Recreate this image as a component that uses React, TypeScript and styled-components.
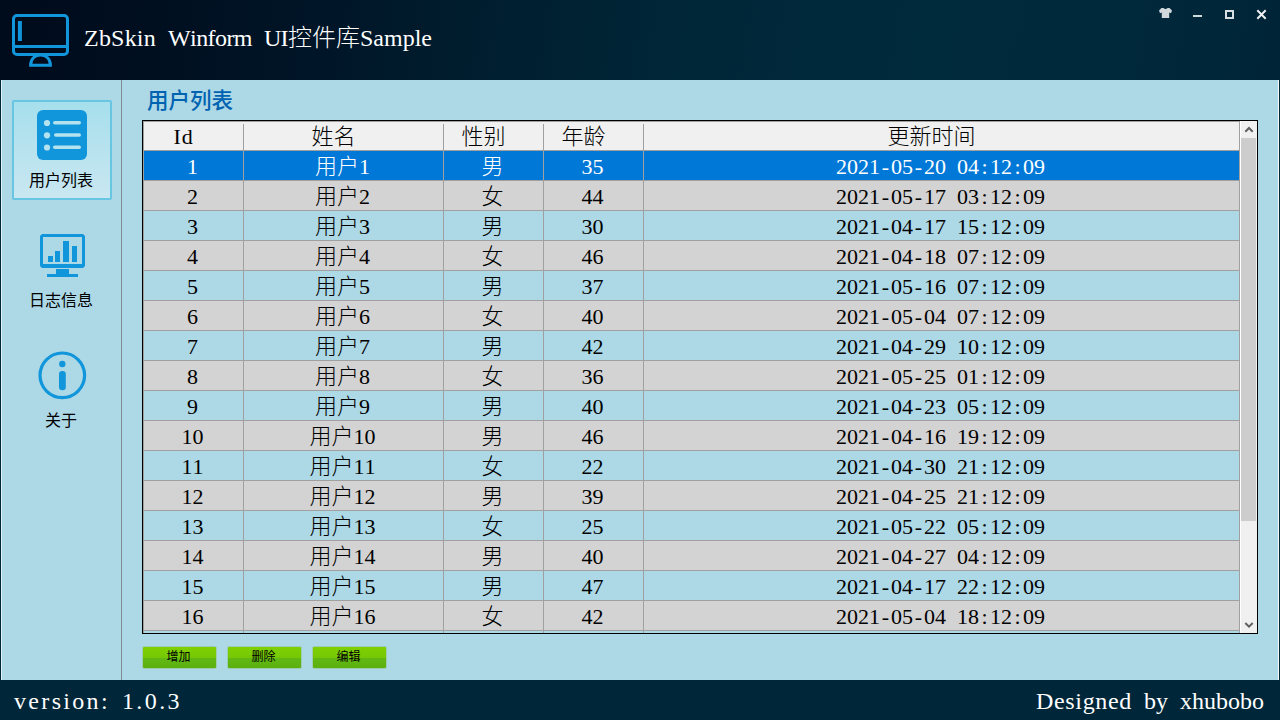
import React from 'react';
import styled, { createGlobalStyle } from 'styled-components';

const Global = createGlobalStyle`
  * { box-sizing: border-box; }
  body { margin: 0; overflow: hidden; }
`;

const song = `'Liberation Serif', 'Noto Sans CJK SC', serif`;
const accent = '#1296db';

const Window = styled.div`
  width: 1280px;
  height: 720px;
  display: flex;
  flex-direction: column;
  background: #002639;
  font-family: ${song};
  font-weight: 300;
  font-kerning: none;
  white-space: pre;
  cursor: default;
`;

const TitleBar = styled.header`
  height: 80px;
  flex: none;
  display: flex;
  justify-content: space-between;
  padding-right: 8px;
  background: linear-gradient(100deg, #000b1b 0%, #000e1f 10%, #001426 23%, #001e2f 38%, #002637 52%, #002b3d 72%, #002a3c 84%, #002437 100%);
`;

const Brand = styled.div`
  display: flex;
  align-items: center;
  padding-left: 11px;
  gap: 15px;
  svg { margin-top: 2px; }
`;

const Caption = styled.h1`
  margin: 0;
  padding-bottom: 5px;
  font-size: 24px;
  line-height: 30px;
  font-weight: 300;
  color: #fff;
  word-spacing: 0.25em;
`;

const Run = styled.span<{ $ls: number }>`
  letter-spacing: ${p => p.$ls}em;
`;

const Controls = styled.div`
  display: flex;
  height: 28px;
`;

const Control = styled.div`
  width: 32px;
  height: 28px;
  svg { display: block; }
`;

const Body = styled.div`
  flex: 1;
  margin: 0 1px;
  display: flex;
  background: #add8e6;
  border-left: 1px solid #e4f3f8;
  border-right: 1px solid #f4fafc;
`;

const SideBar = styled.nav`
  width: 120px;
  flex: none;
  padding: 20px 0 0 10px;
  border-right: 1px solid #7f8c91;
  display: flex;
  flex-direction: column;
  gap: 20px;
`;

const SideItem = styled.div<{ $active?: boolean }>`
  width: 100px;
  height: 100px;
  padding-top: ${p => (p.$active ? 8 : 10)}px;
  display: flex;
  flex-direction: column;
  align-items: center;
  border: ${p => (p.$active ? '2px solid #68c6e2' : 'none')};
  border-radius: 2px;
  background: ${p => (p.$active ? 'linear-gradient(#a6dfec, #c9e7f1)' : 'none')};
  font-size: 16px;
  line-height: 20px;
  font-weight: 400;
  color: #000;
  svg { display: block; margin-bottom: 11px; flex: none; }
`;

const SideLabel = styled.span`
  margin-left: -2px;
`;

const Main = styled.main`
  flex: 1;
  display: flex;
  flex-direction: column;
  padding: 6px 20px 0 20px;
`;

const Heading = styled.h2`
  margin: 0;
  height: 34px;
  padding-left: 5px;
  font-size: 21.5px;
  line-height: 31px;
  font-weight: 500;
  color: #0063b1;
`;

const Grid = styled.div`
  width: 1116px;
  height: 514px;
  flex: none;
  border: 1px solid #000;
  display: flex;
  overflow: hidden;
`;

const Table = styled.div`
  width: 1097px;
  border-top: 1px solid #a0a0a0;
  border-left: 1px solid #a0a0a0;
  font-size: 22px;
  line-height: 31px;
`;

const columns = '100px 200px 100px 100px 596px';

const HeadRow = styled.div`
  display: grid;
  grid-template-columns: ${columns};
  height: 29px;
  background: #f0f0f0;
  border-bottom: 1px solid #a0a0a0;
  color: #000;
`;

const HeadCell = styled.div`
  margin: 2px 0;
  padding-right: 20px;
  text-align: center;
  line-height: 26px;
  border-right: 1px solid #a0a0a0;
  &:first-child { letter-spacing: 0.04em; }
  &:last-child { margin: 0; line-height: 30px; }
`;

const Row = styled.div<{ $kind: 'selected' | 'odd' | 'even' }>`
  display: grid;
  grid-template-columns: ${columns};
  height: 30px;
  color: ${p => (p.$kind === 'selected' ? '#fff' : '#000')};
  background: ${p => ({ selected: '#0078d7', odd: '#add8e6', even: '#d3d3d3' })[p.$kind]};
`;

const Cell = styled.div`
  height: 30px;
  text-align: center;
  padding-right: 2px;
  border-right: 1px solid #a0a0a0;
  border-bottom: 1px solid #a0a0a0;
`;

const Sep = styled.span<{ $pad: number }>`
  padding: 0 ${p => p.$pad}em;
`;

const ScrollBar = styled.div`
  width: 17px;
  background: #f0f0f0;
  border-left: 1px solid #fff;
  display: flex;
  flex-direction: column;
  svg { display: block; flex: none; }
`;

const Track = styled.div`
  flex: 1;
  padding-right: 1px;
`;

const Thumb = styled.div`
  height: 383px;
  background: #cdcdcd;
`;

const Actions = styled.div`
  display: flex;
  gap: 10px;
  padding: 12px 0 0 0;
`;

const Action = styled.button`
  width: 75px;
  height: 23px;
  padding: 0 2px 2px 0;
  border: 1px solid #9fcbb0;
  border-radius: 2px;
  background: linear-gradient(#7fd000 0%, #76c806 50%, #62b813 52%, #5bb00f 100%);
  font-family: ${song};
  font-weight: 400;
  font-size: 12px;
  line-height: 18px;
  color: #000;
`;

const Footer = styled.footer`
  height: 40px;
  flex: none;
  padding: 0 16px 0 14px;
  display: flex;
  justify-content: space-between;
  font-size: 24px;
  line-height: 42px;
  color: #fff;
  word-spacing: 0.25em;
`;

const people: [string, string, string][] = [
  ['男', '35', '2021-05-20 04:12:09'],
  ['女', '44', '2021-05-17 03:12:09'],
  ['男', '30', '2021-04-17 15:12:09'],
  ['女', '46', '2021-04-18 07:12:09'],
  ['男', '37', '2021-05-16 07:12:09'],
  ['女', '40', '2021-05-04 07:12:09'],
  ['男', '42', '2021-04-29 10:12:09'],
  ['女', '36', '2021-05-25 01:12:09'],
  ['男', '40', '2021-04-23 05:12:09'],
  ['男', '46', '2021-04-16 19:12:09'],
  ['女', '22', '2021-04-30 21:12:09'],
  ['男', '39', '2021-04-25 21:12:09'],
  ['女', '25', '2021-05-22 05:12:09'],
  ['男', '40', '2021-04-27 04:12:09'],
  ['男', '47', '2021-04-17 22:12:09'],
  ['女', '42', '2021-05-04 18:12:09'],
];

// Half of the space each separator needs to fill a half-em column.
const sepPad: Record<string, number> = { '-': 0.0835, ':': 0.111, ' ': 0.125 };

const Stamp = ({ value }: { value: string }) => (
  <>
    {value.split(/([-: ])/).map((part, i) =>
      part in sepPad ? <Sep key={i} $pad={sepPad[part]}>{part}</Sep> : part,
    )}
  </>
);

const Logo = () => (
  <svg width="58" height="54" viewBox="0 0 58 54" fill="none" stroke={accent} strokeWidth="3">
    <rect x="2.5" y="1.5" width="54" height="39" rx="3.5" />
    <path d="M2 32.5H57" />
    <path d="M8.9 7V27" strokeWidth="4" />
    <path d="M19.6 51.2C19.6 37.5 39.4 37.5 39.4 51.2Z" />
  </svg>
);

const ListIcon = () => (
  <svg width="50" height="50" viewBox="0 0 50 50">
    <rect width="50" height="50" rx="6" fill={accent} />
    <g fill="#b4e2ef">
      <circle cx="10" cy="13" r="3.1" />
      <circle cx="10" cy="25.3" r="3.1" />
      <circle cx="10" cy="37.5" r="3.1" />
      <rect x="16" y="11" width="28" height="3.6" rx="1.8" />
      <rect x="17" y="23.2" width="27" height="3.6" rx="1.8" />
      <rect x="16" y="35.4" width="28" height="3.6" rx="1.8" />
    </g>
  </svg>
);

const ChartIcon = () => (
  <svg width="50" height="50" viewBox="0 0 50 50" fill={accent}>
    <path fillRule="evenodd" d="M5 4H46L48 6V36L46 38H5L3 36V6ZM6 7V34H45V7Z" />
    <path d="M11 26H16V32H11ZM18 21H23V32H18ZM26 11H32V32H26ZM35 16H40V32H35Z" />
    <path d="M19 39H32V44H41V47H10V44H19Z" />
  </svg>
);

const InfoIcon = () => (
  <svg width="50" height="50" viewBox="0 0 50 50" fill={accent}>
    <circle cx="25.3" cy="25.3" r="22.3" fill="none" stroke={accent} strokeWidth="3.2" />
    <circle cx="25.3" cy="14" r="3.2" />
    <rect x="22" y="21" width="6.8" height="19.2" rx="3.2" />
  </svg>
);

const App = () => (
  <Window>
    <Global />
    <TitleBar>
      <Brand>
        <Logo />
        <Caption>
          <Run $ls={0.009}>ZbSkin</Run> <Run $ls={-0.024}>Winform</Run> <Run $ls={-0.027}>UI</Run>控件库Sample
        </Caption>
      </Brand>
      <Controls>
        <Control>
          <svg width="32" height="28" fill="#d0d8dc">
            <path d="M17.5 8H19.4Q21.5 10 23.6 8H25.5L28 10.4L27 13.2L25.2 12.6V18H17.8V12.6L16 13.2L15 10.4Z" />
          </svg>
        </Control>
        <Control>
          <svg width="32" height="28" fill="#d0d8dc"><rect x="17" y="15" width="9" height="2" /></svg>
        </Control>
        <Control>
          <svg width="32" height="28" fill="none" stroke="#d8dfe2" strokeWidth="2"><rect x="18" y="11" width="7" height="7" /></svg>
        </Control>
        <Control>
          <svg width="32" height="28" stroke="#eef1f3" strokeWidth="2"><path d="M17.3 10.3L25.7 18.7M25.7 10.3L17.3 18.7" /></svg>
        </Control>
      </Controls>
    </TitleBar>
    <Body>
      <SideBar>
        <SideItem $active><ListIcon /><SideLabel>用户列表</SideLabel></SideItem>
        <SideItem><ChartIcon /><SideLabel>日志信息</SideLabel></SideItem>
        <SideItem><InfoIcon /><SideLabel>关于</SideLabel></SideItem>
      </SideBar>
      <Main>
        <Heading>用户列表</Heading>
        <Grid>
          <Table>
            <HeadRow>
              {['Id', '姓名', '性别', '年龄', '更新时间'].map(h => <HeadCell key={h}>{h}</HeadCell>)}
            </HeadRow>
            {people.map(([sex, age, time], i) => (
              <Row key={i} $kind={i === 0 ? 'selected' : i % 2 ? 'even' : 'odd'}>
                <Cell>{i + 1}</Cell>
                <Cell>{`用户${i + 1}`}</Cell>
                <Cell>{sex}</Cell>
                <Cell>{age}</Cell>
                <Cell><Stamp value={time} /></Cell>
              </Row>
            ))}
            <Row $kind="odd"><Cell /><Cell /><Cell /><Cell /><Cell /></Row>
          </Table>
          <ScrollBar>
            <svg width="16" height="17" fill="none" stroke="#606060" strokeWidth="2"><path d="M4.3 10.7L8 7L11.7 10.7" /></svg>
            <Track><Thumb /></Track>
            <svg width="16" height="17" fill="none" stroke="#606060" strokeWidth="2"><path d="M4.3 7L8 10.7L11.7 7" /></svg>
          </ScrollBar>
        </Grid>
        <Actions>
          <Action>增加</Action>
          <Action>删除</Action>
          <Action>编辑</Action>
        </Actions>
      </Main>
    </Body>
    <Footer>
      <span><Run $ls={0.097}>version:</Run> <Run $ls={0.1}>1.0.3</Run></span>
      <span><Run $ls={0.028}>Designed</Run> by xhubobo</span>
    </Footer>
  </Window>
);

export default App;
